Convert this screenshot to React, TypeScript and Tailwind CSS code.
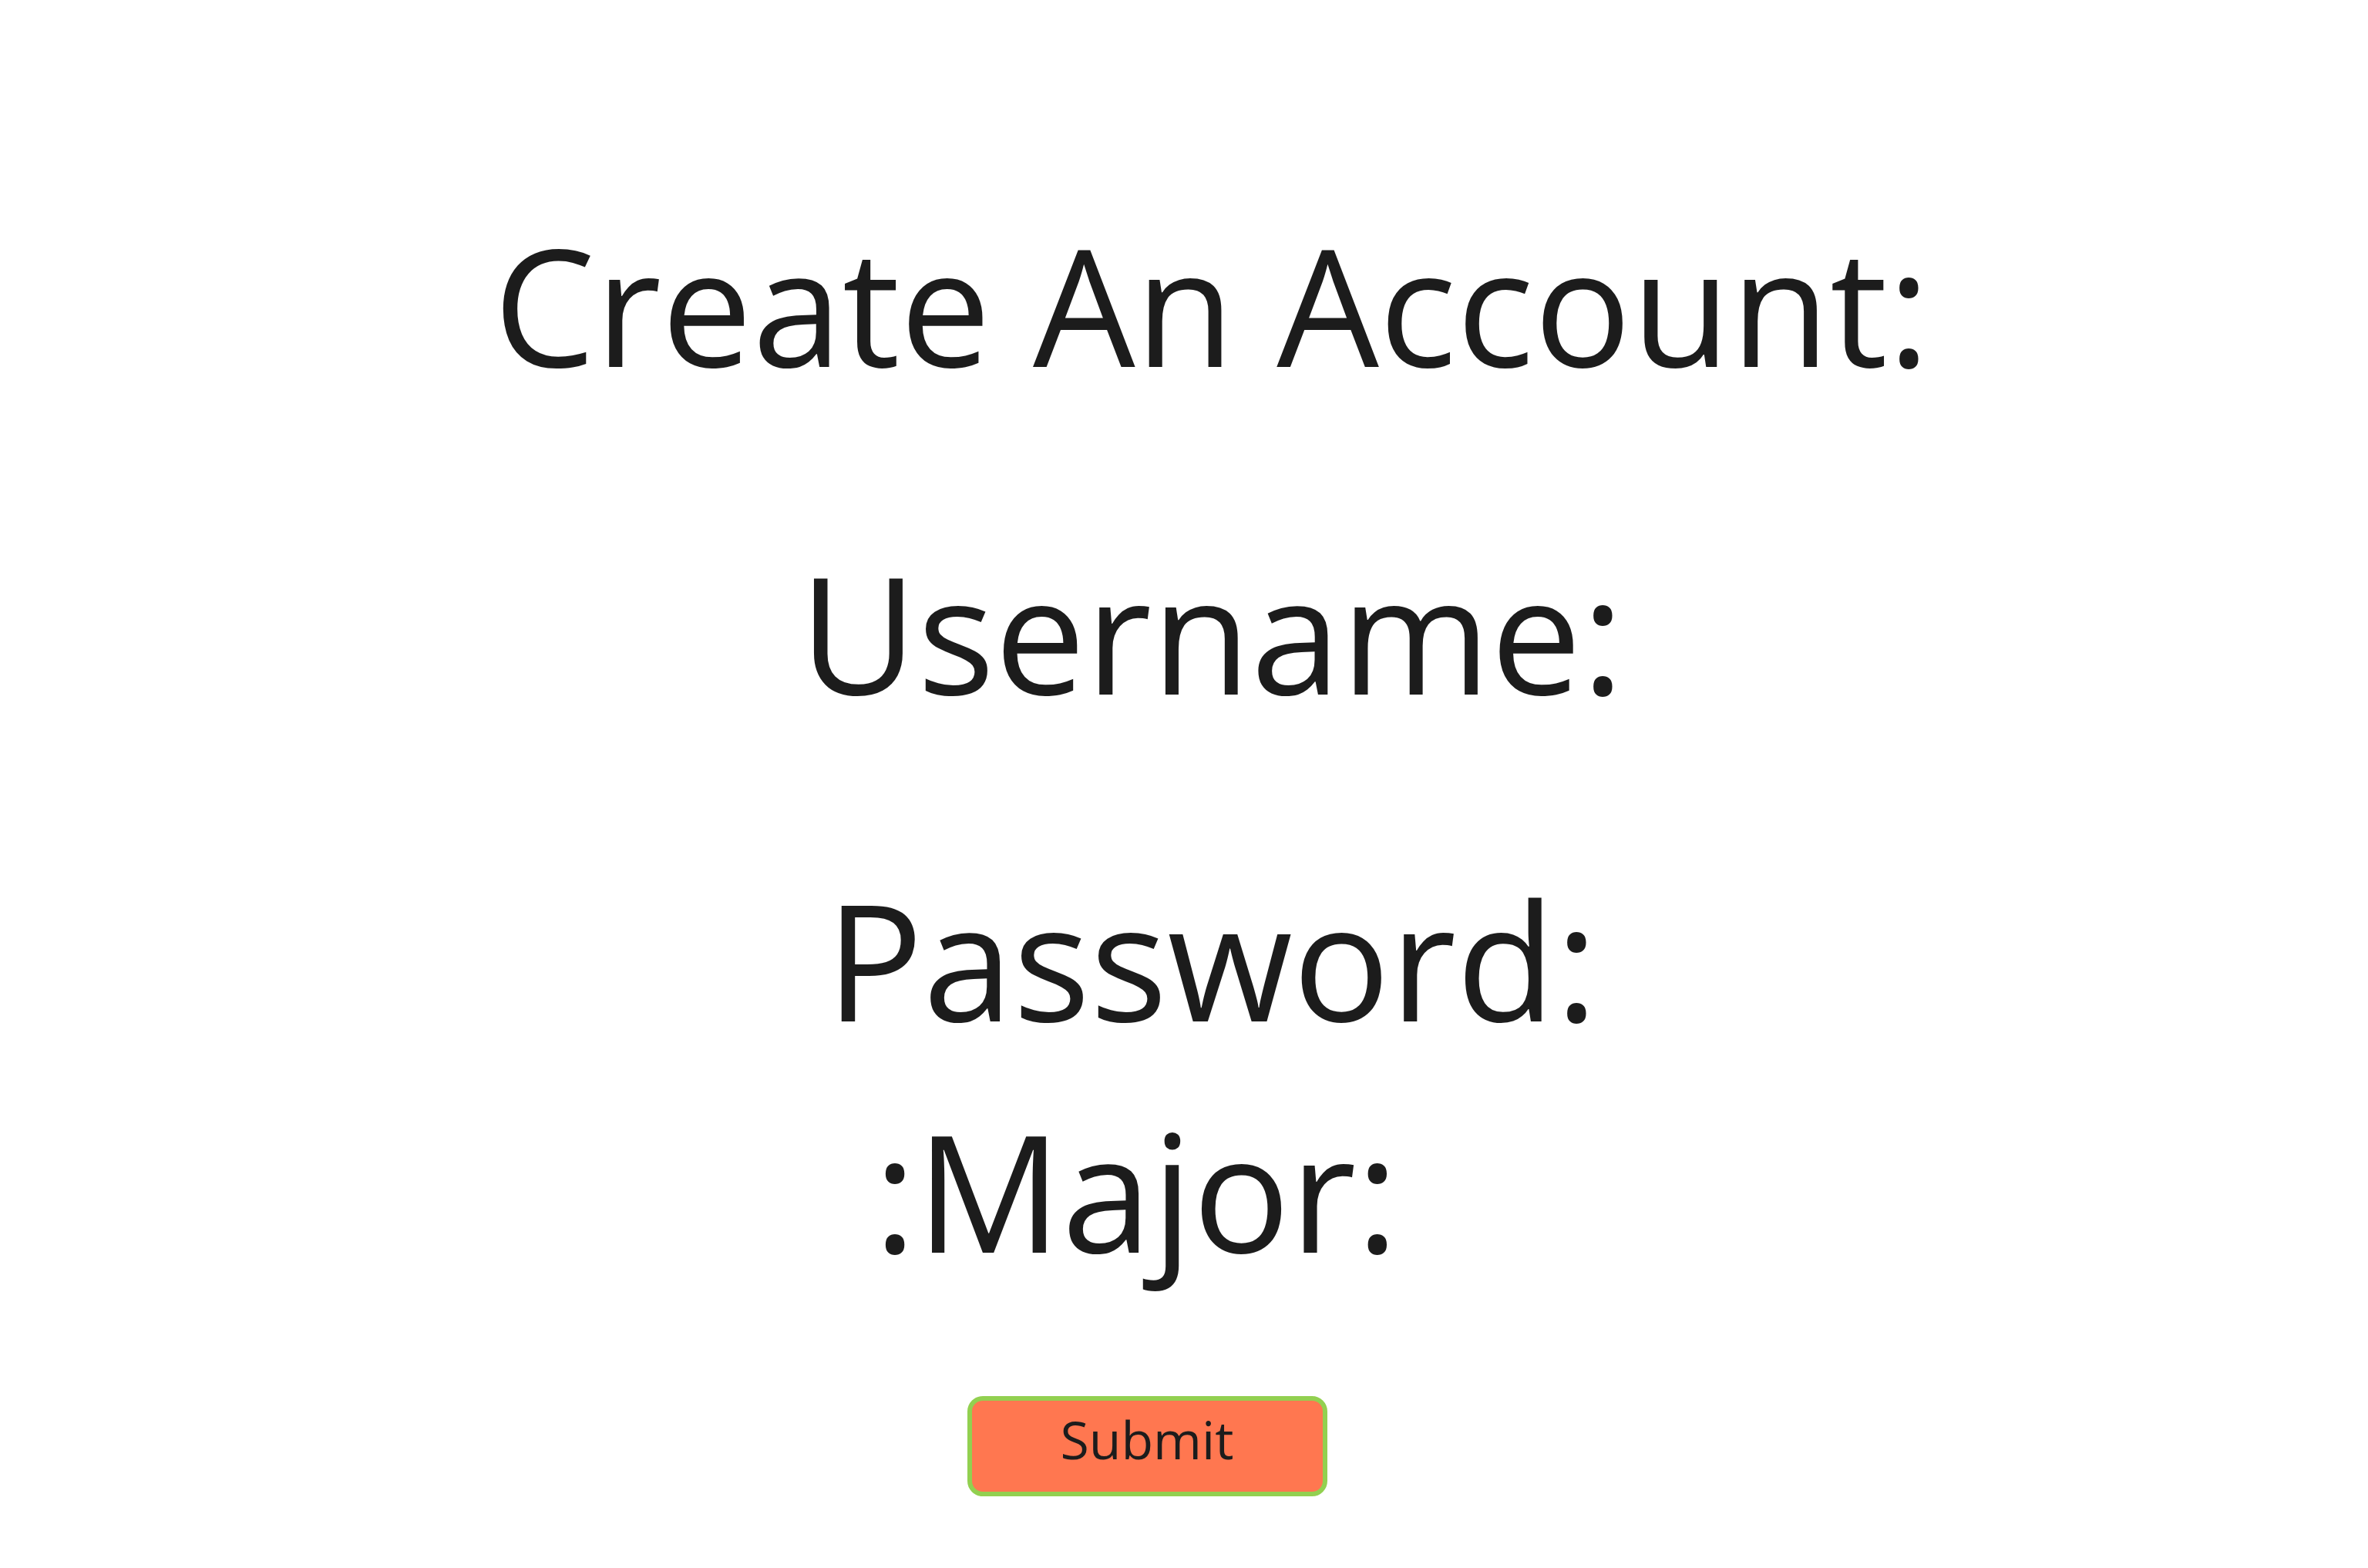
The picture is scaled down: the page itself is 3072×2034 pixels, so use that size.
import React from 'react';

const App: React.FC = () => {
  return (
    <div className="min-h-screen bg-white flex flex-col items-center font-['Open_Sans',sans-serif] text-[#1c1c1c]">
      {/* Heading */}
      <h1 className="mt-[290px] pl-[72px] text-[210px] leading-none font-normal whitespace-nowrap">
        Create An Account:
      </h1>

      {/* Fields */}
      <label className="mt-[215px] pl-[72px] text-[210px] leading-none whitespace-nowrap">
        Username:
      </label>
      <label className="mt-[214px] pl-[72px] text-[210px] leading-none whitespace-nowrap">
        Password:
      </label>
      <label className="mt-[90px] pr-[124px] text-[210px] leading-none whitespace-nowrap">
        :Major:
      </label>

      <button
        type="button"
        className="mt-[162px] mr-[96px] box-border w-[467px] h-[130px] pt-[16px] flex justify-center items-start rounded-[20px] border-[6px] border-[#92d050] bg-[#ff7750] text-[68px] leading-none text-[#1c1c1c]"
      >
        Submit
      </button>
    </div>
  );
};

export default App;
